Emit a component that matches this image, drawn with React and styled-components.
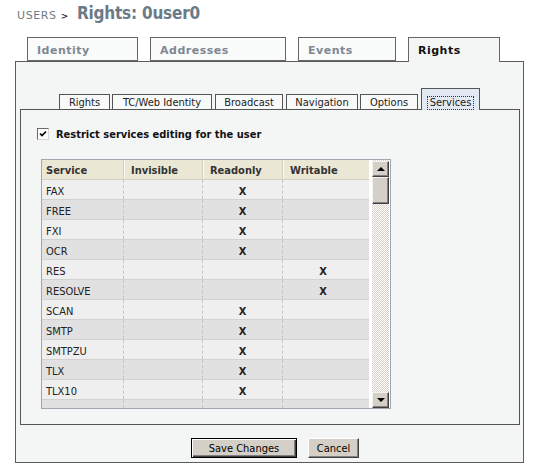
import React from 'react'
import styled, { createGlobalStyle } from 'styled-components'

const GlobalStyle = createGlobalStyle`
  body {
    margin: 0;
    background: #fff;
    font-family: "DejaVu Sans Condensed", "DejaVu Sans", Verdana, sans-serif;
    font-size: 11px;
    color: #222;
  }
`

const services = [
  { name: 'FAX', readonly: true },
  { name: 'FREE', readonly: true },
  { name: 'FXI', readonly: true },
  { name: 'OCR', readonly: true },
  { name: 'RES', writable: true },
  { name: 'RESOLVE', writable: true },
  { name: 'SCAN', readonly: true },
  { name: 'SMTP', readonly: true },
  { name: 'SMTPZU', readonly: true },
  { name: 'TLX', readonly: true },
  { name: 'TLX10', readonly: true },
  { name: '' },
]

const topTabs = [
  { label: 'Identity', width: 111 },
  { label: 'Addresses', width: 136 },
  { label: 'Events', width: 98 },
  { label: 'Rights', width: 92, active: true },
]

const subTabs = [
  { label: 'Rights', width: 51, gap: 0 },
  { label: 'TC/Web Identity', width: 100, gap: 2 },
  { label: 'Broadcast', width: 68, gap: 3 },
  { label: 'Navigation', width: 72, gap: 3 },
  { label: 'Options', width: 58, gap: 2 },
  { label: 'Services', width: 59, gap: 3, active: true },
]

const Page = styled.div`
  width: 537px;
  height: 472px;
  overflow: hidden;
`

const Header = styled.div`
  height: 37px;
  padding-left: 17px;
  display: flex;
  align-items: baseline;
  gap: 8px;
`

const Crumb = styled.span`
  font-family: "DejaVu Sans", Verdana, sans-serif;
  font-size: 11px;
  letter-spacing: 0.6px;
  color: #6f7d89;
  padding-top: 9px;

  b {
    font-weight: bold;
    color: #333;
    font-size: 9px;
  }
`

const Title = styled.h1`
  margin: 0;
  padding-top: 1px;
  font-family: "DejaVu Sans Condensed", "DejaVu Sans", Verdana, sans-serif;
  font-size: 17px;
  font-weight: bold;
  letter-spacing: -0.2px;
  color: #6b7a87;
`

const TabBar = styled.div`
  display: flex;
  gap: 12px;
  padding-left: 27px;
  height: 24px;
  position: relative;
  z-index: 1;
`

const TopTab = styled.div`
  box-sizing: border-box;
  width: ${p => p.$width}px;
  height: ${p => (p.$active ? 25 : 24)}px;
  border: 1px solid #666;
  border-bottom: ${p => (p.$active ? 'none' : '1px solid #666')};
  background: ${p => (p.$active ? '#f4f6f6' : '#fafbfb')};
  padding: 6px 0 0 9px;
  font-family: "DejaVu Sans", Verdana, sans-serif;
  font-size: 11px;
  font-weight: bold;
  letter-spacing: 0.5px;
  color: ${p => (p.$active ? '#111' : '#7d8893')};
`

const Panel = styled.div`
  box-sizing: border-box;
  margin: 0 13px 0 15px;
  height: 402px;
  border: 1px solid #5c5c5c;
  background: #f4f6f6;
  display: flex;
  flex-direction: column;
`

const SubTabBar = styled.div`
  display: flex;
  align-items: flex-end;
  padding: 26px 0 0 43px;
  position: relative;
  z-index: 1;
`

const SubTab = styled.div`
  box-sizing: border-box;
  width: ${p => p.$width}px;
  margin-left: ${p => p.$gap}px;
  height: ${p => (p.$active ? 22 : 15)}px;
  margin-bottom: ${p => (p.$active ? -1 : 0)}px;
  border: 1px solid #555;
  border-bottom: none;
  background: ${p => (p.$active ? '#e2e9f3' : '#f8f9f9')};
  display: flex;
  align-items: flex-end;
  justify-content: center;
  padding-bottom: ${p => (p.$active ? 1 : 0)}px;
  font-size: 11px;
  line-height: 12px;
  color: #222;

  span {
    outline: ${p => (p.$active ? '1px dotted #333' : 'none')};
    padding: 0 2px;
  }
`

const InnerPanel = styled.div`
  box-sizing: border-box;
  margin: 0 3px 0 4px;
  height: 316px;
  border: 1px solid #555;
  background: #f4f6f6;
  padding: 18px 0 0 16px;
`

const CheckRow = styled.label`
  display: flex;
  align-items: center;
  gap: 7px;
  height: 12px;
  font-weight: bold;
  font-size: 11px;
  color: #111;
`

const CheckBox = styled.span`
  box-sizing: border-box;
  width: 12px;
  height: 12px;
  border: 1px solid #6b6b6b;
  border-right-color: #d6d6d6;
  border-bottom-color: #d6d6d6;
  background: #fff;
  display: flex;
  align-items: center;
  justify-content: center;
`

const Grid = styled.div`
  box-sizing: border-box;
  margin: 19px 0 0 4px;
  width: 350px;
  height: 250px;
  border: 1px solid #9ea7b0;
  background: #fff;
  display: flex;
  gap: 3px;
  overflow: hidden;
`

const TableArea = styled.div`
  width: 327px;
  overflow: hidden;
`

const Row = styled.div`
  display: grid;
  grid-template-columns: 81px 79px 80px 87px;
  height: 20px;
  box-sizing: border-box;
  background: ${p => (p.$head ? '#ebe7d5' : p.$odd ? '#e1e1e1' : '#efefef')};
  border-bottom: 1px solid ${p => (p.$head ? '#d5d1c0' : '#d2d2d2')};
`

const Cell = styled.div`
  display: flex;
  align-items: center;
  padding-top: ${p => (p.$head ? 2 : 3)}px;
  justify-content: ${p => (p.$center ? 'center' : 'flex-start')};
  padding-left: ${p => (p.$center ? 0 : p.$first ? 4 : 7)}px;
  padding-right: ${p => p.$pr || 0}px;
  border-left: ${p =>
    p.$first ? 'none' : p.$head ? '1px solid #d2cebd' : '1px dashed #c4c4c4'};
  box-shadow: ${p => (p.$head && !p.$first ? 'inset 1px 0 0 #fbfaf5' : 'none')};
  font-weight: ${p => (p.$head || p.$center ? 'bold' : 'normal')};
  color: ${p => (p.$head ? '#333' : '#222')};
  font-size: 11px;
`

const ScrollBar = styled.div`
  width: 17px;
  display: flex;
  flex-direction: column;
  background: repeating-conic-gradient(#d4d0c8 0% 25%, #fff 0% 50%) 0 0 / 2px 2px;
`

const ScrollButton = styled.div`
  box-sizing: border-box;
  height: ${p => p.$h}px;
  margin-top: ${p => p.$mt || 0}px;
  background: #d4d0c8;
  border: 1px solid;
  border-color: #f4f3ef #404040 #404040 #f4f3ef;
  box-shadow: inset -1px -1px 0 #808080;
  display: flex;
  align-items: center;
  justify-content: center;
`

const Arrow = styled.span`
  width: 0;
  height: 0;
  border-left: 4px solid transparent;
  border-right: 4px solid transparent;
  ${p => (p.$down ? 'border-top: 4px solid #000;' : 'border-bottom: 4px solid #000;')}
`

const Footer = styled.div`
  display: flex;
  gap: 11px;
  padding: 13px 0 0 175px;
`

const Button = styled.button`
  box-sizing: border-box;
  height: 20px;
  width: ${p => p.$w}px;
  padding: 0;
  font-family: "DejaVu Sans Condensed", "DejaVu Sans", Tahoma, sans-serif;
  font-size: 11px;
  color: #000;
  background: #d4d0c8;
  border: 1px solid;
  border-color: ${p => (p.$default ? '#000' : '#fff #404040 #404040 #fff')};
  box-shadow: ${p =>
    p.$default
      ? 'inset 1px 1px 0 #fff, inset -1px -1px 0 #404040, inset -2px -2px 0 #808080'
      : 'inset -1px -1px 0 #808080'};
`

export default function App() {
  return (
    <Page>
      <GlobalStyle />
      <Header>
        <Crumb>
          USERS <b>&gt;</b>
        </Crumb>
        <Title>Rights: 0user0</Title>
      </Header>
      <TabBar>
        {topTabs.map(t => (
          <TopTab key={t.label} $width={t.width} $active={t.active}>
            {t.label}
          </TopTab>
        ))}
      </TabBar>
      <Panel>
        <SubTabBar>
          {subTabs.map(t => (
            <SubTab key={t.label} $width={t.width} $gap={t.gap} $active={t.active}>
              <span>{t.label}</span>
            </SubTab>
          ))}
        </SubTabBar>
        <InnerPanel>
          <CheckRow>
            <CheckBox>
              <svg width="8" height="8" viewBox="0 0 8 8">
                <path d="M1 3.5 L3 5.5 L7 1.5" stroke="#000" strokeWidth="1.6" fill="none" />
              </svg>
            </CheckBox>
            Restrict services editing for the user
          </CheckRow>
          <Grid>
            <TableArea>
              <Row $head>
                <Cell $head $first>Service</Cell>
                <Cell $head>Invisible</Cell>
                <Cell $head>Readonly</Cell>
                <Cell $head>Writable</Cell>
              </Row>
              {services.map((s, i) => (
                <Row key={s.name || 'blank'} $odd={i % 2 === 1}>
                  <Cell $first>{s.name}</Cell>
                  <Cell />
                  <Cell $center>{s.readonly ? 'X' : ''}</Cell>
                  <Cell $center $pr={6}>{s.writable ? 'X' : ''}</Cell>
                </Row>
              ))}
            </TableArea>
            <ScrollBar>
              <ScrollButton $h={16} $mt={1}>
                <Arrow />
              </ScrollButton>
              <ScrollButton $h={27} />
              <div style={{ flex: 1 }} />
              <ScrollButton $h={16} $mt={0}>
                <Arrow $down />
              </ScrollButton>
            </ScrollBar>
          </Grid>
        </InnerPanel>
        <Footer>
          <Button $default $w={106}>Save Changes</Button>
          <Button $w={51}>Cancel</Button>
        </Footer>
      </Panel>
    </Page>
  )
}
